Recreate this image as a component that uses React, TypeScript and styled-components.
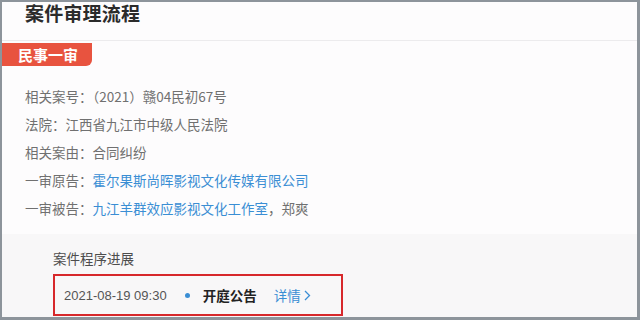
import styled, { createGlobalStyle } from "styled-components";

const GlobalStyle = createGlobalStyle`
  html, body {
    margin: 0;
    padding: 0;
    background: #8d949b;
  }
  body {
    font-family: "Noto Sans CJK SC", "Liberation Sans", sans-serif;
  }
`;

const Frame = styled.div`
  width: 640px;
  height: 320px;
  box-sizing: border-box;
  border-top: 2px solid #8d949b;
  border-left: 2px solid #8d949b;
  border-right: 3px solid #8d949b;
  border-bottom: 3px solid #8d949b;
  background: #fdfcfd;
  display: flex;
  flex-direction: column;
  overflow: hidden;
`;

const Header = styled.div`
  height: 39px;
  box-sizing: border-box;
  border-bottom: 1px solid #ecebed;
  padding-left: 23px;
  display: flex;
  align-items: flex-start;
`;

const Title = styled.h2`
  margin: 0;
  font-size: 19px;
  line-height: 22px;
  font-weight: 700;
  color: #2b2b2b;
  letter-spacing: 0.2px;
`;

const Tag = styled.div`
  margin-top: 2px;
  width: 90px;
  height: 23px;
  background: #e8533f;
  border-radius: 0 0 6px 0;
  color: #fff;
  font-size: 15px;
  font-weight: 700;
  line-height: 23px;
  padding-left: 16px;
  box-sizing: border-box;
`;

const InfoList = styled.div`
  padding: 16px 0 0 23px;
  display: flex;
  flex-direction: column;
`;

const InfoRow = styled.div`
  height: 28px;
  line-height: 28px;
  font-size: 13.5px;
  color: #707070;
  white-space: nowrap;
`;

const Link = styled.span`
  color: #3a8ed4;
`;

const Progress = styled.div`
  flex: 1;
  background: #f8f7f8;
  margin-top: 12px;
  padding: 14px 0 0 51px;
  display: flex;
  flex-direction: column;
`;

const SubTitle = styled.div`
  font-size: 13.5px;
  color: #4d4d4d;
  line-height: 20px;
`;

const EventBox = styled.div`
  margin-top: 6px;
  width: 290px;
  height: 42px;
  box-sizing: border-box;
  border: 2px solid #d7282b;
  display: flex;
  align-items: center;
  padding-left: 9px;
  font-size: 13.5px;
`;

const Time = styled.span`
  color: #555;
  font-family: "Liberation Sans", "Noto Sans CJK SC", sans-serif;
  font-size: 13px;
`;

const Dot = styled.span`
  width: 5px;
  height: 5px;
  border-radius: 50%;
  background: #3a8ed4;
  margin: 0 13px 0 18px;
`;

const EventName = styled.span`
  font-weight: 700;
  color: #222;
`;

const Detail = styled.span`
  margin-left: 17px;
  color: #3a8ed4;
  display: flex;
  align-items: center;
  gap: 3px;
`;

export default function App() {
  return (
    <>
      <GlobalStyle />
      <Frame>
        <Header>
          <Title>案件审理流程</Title>
        </Header>
        <Tag>民事一审</Tag>
        <InfoList>
          <InfoRow>相关案号：（2021）赣04民初67号</InfoRow>
          <InfoRow>法院：江西省九江市中级人民法院</InfoRow>
          <InfoRow>相关案由：合同纠纷</InfoRow>
          <InfoRow>
            一审原告：<Link>霍尔果斯尚晖影视文化传媒有限公司</Link>
          </InfoRow>
          <InfoRow>
            一审被告：<Link>九江羊群效应影视文化工作室</Link>，郑爽
          </InfoRow>
        </InfoList>
        <Progress>
          <SubTitle>案件程序进展</SubTitle>
          <EventBox>
            <Time>2021-08-19 09:30</Time>
            <Dot />
            <EventName>开庭公告</EventName>
            <Detail>
              详情
              <svg width="7" height="11" viewBox="0 0 7 11">
                <path d="M1 1l4.5 4.5L1 10" fill="none" stroke="#3a8ed4" strokeWidth="1.3" />
              </svg>
            </Detail>
          </EventBox>
        </Progress>
      </Frame>
    </>
  );
}
